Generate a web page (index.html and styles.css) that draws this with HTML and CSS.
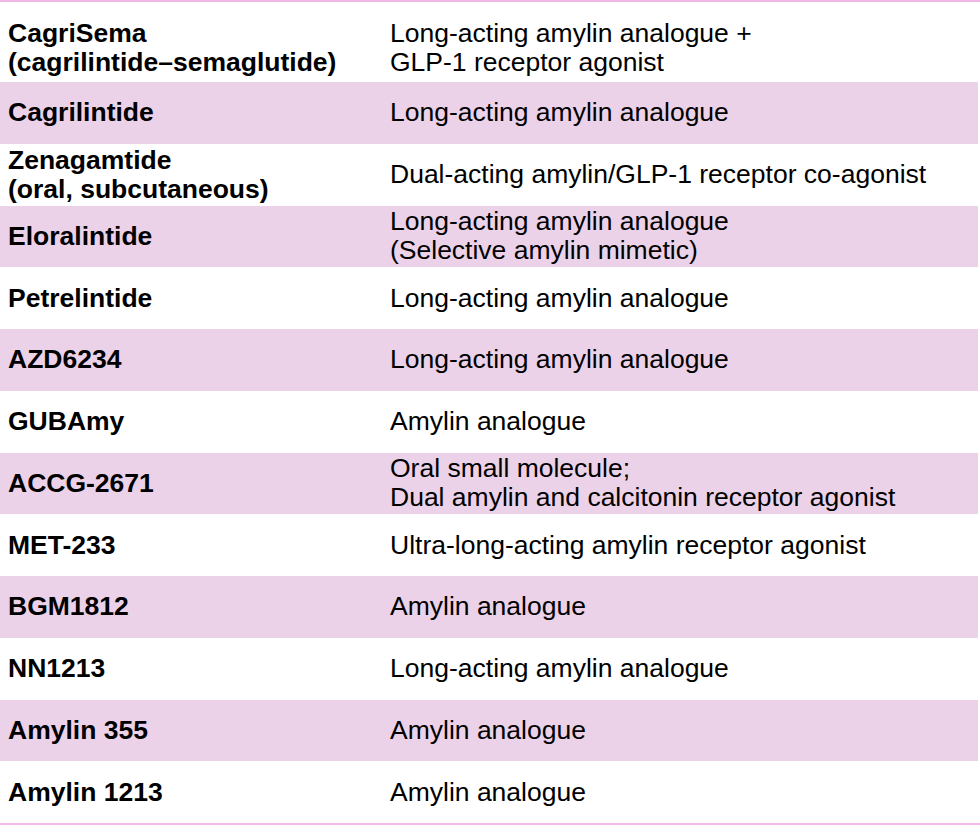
FILE: index.html
```html
<!DOCTYPE html>
<html lang="en">
<head>
<meta charset="utf-8">
<title>Amylin-based agents</title>
<link rel="stylesheet" href="styles.css">
</head>
<body>
<div class="table">
  <div class="row first">
    <div class="name">CagriSema<br>(cagrilintide–semaglutide)</div>
    <div class="desc">Long-acting amylin analogue +<br>GLP-1 receptor agonist</div>
  </div>
  <div class="row alt">
    <div class="name">Cagrilintide</div>
    <div class="desc">Long-acting amylin analogue</div>
  </div>
  <div class="row">
    <div class="name">Zenagamtide<br>(oral, subcutaneous)</div>
    <div class="desc">Dual-acting amylin/GLP-1 receptor co-agonist</div>
  </div>
  <div class="row alt">
    <div class="name">Eloralintide</div>
    <div class="desc">Long-acting amylin analogue<br>(Selective amylin mimetic)</div>
  </div>
  <div class="row">
    <div class="name">Petrelintide</div>
    <div class="desc">Long-acting amylin analogue</div>
  </div>
  <div class="row alt">
    <div class="name">AZD6234</div>
    <div class="desc">Long-acting amylin analogue</div>
  </div>
  <div class="row">
    <div class="name">GUBAmy</div>
    <div class="desc">Amylin analogue</div>
  </div>
  <div class="row alt">
    <div class="name">ACCG-2671</div>
    <div class="desc">Oral small molecule;<br>Dual amylin and calcitonin receptor agonist</div>
  </div>
  <div class="row">
    <div class="name">MET-233</div>
    <div class="desc">Ultra-long-acting amylin receptor agonist</div>
  </div>
  <div class="row alt">
    <div class="name">BGM1812</div>
    <div class="desc">Amylin analogue</div>
  </div>
  <div class="row">
    <div class="name">NN1213</div>
    <div class="desc">Long-acting amylin analogue</div>
  </div>
  <div class="row alt">
    <div class="name">Amylin 355</div>
    <div class="desc">Amylin analogue</div>
  </div>
  <div class="row">
    <div class="name">Amylin 1213</div>
    <div class="desc">Amylin analogue</div>
  </div>
</div>
</body>
</html>
```

FILE: styles.css
```css
html, body {
  margin: 0;
  padding: 0;
  background: #ffffff;
}

body {
  font-family: "Liberation Sans", Arial, Helvetica, sans-serif;
  color: #000000;
}

.table {
  width: 980px;
  border-top: 2px solid #f2b9e8;
  border-bottom: 2px solid #f2b9e8;
  box-sizing: border-box;
}

.row {
  display: flex;
  align-items: center;
  height: 61.75px;
  box-sizing: border-box;
  width: 978px;
  font-size: 26.5px;
  line-height: 29px;
}

.row.first {
  height: 80px;
  padding-top: 11px;
}

.row.alt {
  background: #ecd2e8;
}

.name {
  width: 390px;
  flex: none;
  padding-left: 8px;
  box-sizing: border-box;
  font-weight: 700;
}

.desc {
  flex: 1;
  font-weight: 400;
}
```
